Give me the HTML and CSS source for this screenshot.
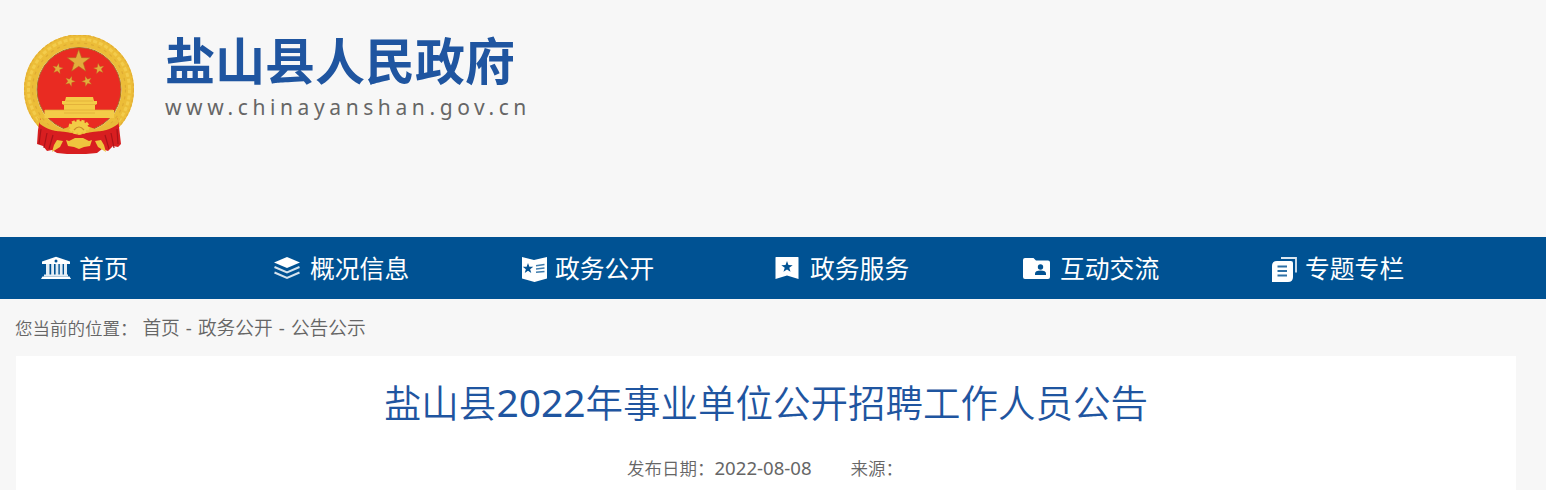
FILE: index.html
```html
<!DOCTYPE html>
<html lang="zh-CN">
<head>
    <meta charset="UTF-8">
    <meta name="viewport" content="width=device-width, initial-scale=1.0">
    <title>盐山县2022年事业单位公开招聘工作人员公告</title>
    <link rel="stylesheet" href="styles.css">
</head>
<body>
    <header class="header">
        <svg class="emblem" viewBox="0 0 112 120">
            <defs>
                <path id="star" d="M0-10 2.4-3.2 9.5-3.1 3.8 1.2 5.9 8.1 0 4-5.9 8.1-3.8 1.2-9.5-3.1-2.4-3.2z"/>
            </defs>
            <circle cx="56" cy="54.5" r="48.800" fill="none" stroke="#ecbd38" stroke-width="12.5"/>
            <circle cx="56" cy="54.5" r="54.400" fill="none" stroke="#e3ae35" stroke-width="1.2" stroke-dasharray="3 2"/>
            <circle cx="56" cy="54.5" r="50.500" fill="none" stroke="#f3cc4c" stroke-width="3" stroke-dasharray="4 2"/>
            <circle cx="56" cy="54.5" r="46.500" fill="none" stroke="#dfab33" stroke-width="1.2" stroke-dasharray="3 4"/>
            <circle cx="56" cy="54.5" r="42" fill="#e92b22" stroke="#a9701d" stroke-width="1"/>
            <g fill="#e2ad3c" stroke="#b46a20" stroke-width=".5">
                <use href="#star" transform="translate(55.7 26.5) scale(1.2)"/>
                <use href="#star" transform="translate(34.7 33.7) rotate(10) scale(.56)"/>
                <use href="#star" transform="translate(76 33.7) rotate(-10) scale(.56)"/>
                <use href="#star" transform="translate(47 46.3) rotate(20) scale(.54)"/>
                <use href="#star" transform="translate(64 46.3) rotate(-20) scale(.54)"/>
            </g>
            <path fill="#f4cb48" d="M43 62h27l1 4h3v3l-2 1v5h19v8H21.500v-8H41v-5l-2-1v-3h3z"/>
            <path fill="none" stroke="#dda936" stroke-width=".7" d="M40 69.500h33M43 66h27M22 75h68M41 78h31"/>
            <!-- ribbons -->
            <path fill="#d81e20" d="M17 83c2 8 10 12 19 13l20 3 20-3c9-1 17-5 19-13l3 26-3 3-5-1-5 5-6-2-5 4-11 1H44l-10-1-5-3-5 1-4-5-6-2 1-14z"/>
            <path fill="none" stroke="#a91419" stroke-width="1.2" d="M18 94l-2 15M24 98l-3 15M30 100l-4 14M94 94l1 15M88 98l3 15M82 100l4 14"/>
            <path fill="#e9ba39" d="M13 80c6 8 16 12 27 14l8-3h16l8 3c10-2 20-6 27-14l-4 9c-8 6-16 8-25 7l-14 4-14-4c-9 1-17-1-25-7z"/>
            <ellipse cx="56" cy="92" rx="9" ry="6" fill="#f2cb46" stroke="#f2cb46" stroke-width="3" stroke-dasharray="3 1.700"/>
            <path fill="none" stroke="#cd8d29" stroke-width="1.200" d="M51 95q5-6 10 0"/>
            <path fill="#efc43e" d="M46 106l6-3h8l6 3 3-1-2 6-6 1-5 2-5-2-6-1-2-6zM34 105l6 1-3 6-8 5 2-7zM78 105l-6 1 3 6 8 5-2-7z"/>
        </svg>
        <div class="site-name">
            <h1>盐山县人民政府</h1>
            <p>www.chinayanshan.gov.cn</p>
        </div>
    </header>

    <nav class="nav">
        <a href="#">
            <svg viewBox="0 0 30 30">
                <path fill="#fff" d="M15 3.700 29 8.500V11H1V8.500zM1.500 23.500h27L30 26H0z"/>
                <path fill="#e4edf4" d="M5 11h3.500v11H5zM10.200 11h2.800v11h-2.800zM14.600 11h2.800v11h-2.800zM18.800 11h2.800v11h-2.800zM23 11h3v11h-3zM3 21.500h24v2H3z"/>
                <circle cx="15" cy="8" r="1.500" fill="#005293"/>
            </svg>
            <span>首页</span>
        </a>
        <a href="#">
            <svg viewBox="0 0 30 30">
                <path fill="#fff" d="M15 4 28 9.500 15 15 2 9.500z"/>
                <path fill="none" stroke="#d5e3ee" stroke-width="2" d="M2.500 14 15 19.500 27.500 14M2.500 19.500 15 25l12.500-5.500"/>
            </svg>
            <span>概况信息</span>
        </a>
        <a href="#">
            <svg viewBox="0 0 30 30">
                <path fill="#fff" d="M5 4l12 3L30 4v21.500L17.500 29 5 25.500z"/>
                <use href="#star" fill="#005293" stroke="#005293" stroke-width="3" transform="translate(11 15.500) scale(.38)"/>
                <path fill="none" stroke="#3f7cac" stroke-width="1.500" d="M19 12.800 27.500 11.500M19 16l8.500-1M19 19.200l8.500-.700"/>
            </svg>
            <span>政务公开</span>
        </a>
        <a href="#">
            <svg viewBox="0 0 30 30">
                <path fill="#fff" d="M4 4h22q.500 0 .500.500V26L15 22.500 3.500 26V4.500q0-.500.500-.500z"/>
                <use href="#star" fill="#005293" transform="translate(15 14) scale(.6)"/>
            </svg>
            <span>政务服务</span>
        </a>
        <a href="#">
            <svg viewBox="0 0 30 30">
                <path fill="#fff" d="M3 5h8.500L14 7.500h12q2 0 2 2V24q0 2-2 2H3q-2 0-2-2V7q0-2 2-2z"/>
                <circle cx="18.500" cy="14" r="2.700" fill="#005293"/>
                <path fill="#005293" d="M13 22v-1.500q0-3 5.500-3t5.500 3V22z"/>
            </svg>
            <span>互动交流</span>
        </a>
        <a href="#">
            <svg viewBox="0 0 30 30">
                <path fill="none" stroke="#dbe7f1" stroke-width="1.800" d="M14 5h15v14.500"/>
                <path fill="#fff" d="M10 8h14q2 0 2 2v14q0 5-5 5H5V13q0-5 5-5z"/>
                <path fill="none" stroke="#2e70a5" stroke-width="1.800" d="M10.500 13.500h9.500M10.500 18h9.500M10.500 22.500h9.500"/>
            </svg>
            <span>专题专栏</span>
        </a>
    </nav>

    <div class="breadcrumb">
        <span class="label">您当前的位置：</span>
        <a href="#">首页</a><i>-</i><a href="#">政务公开</a><i>-</i><a href="#">公告公示</a>
    </div>

    <main class="article">
        <h2>盐山县<span class="year">2022</span>年事业单位公开招聘工作人员公告</h2>
        <div class="meta">
            <span>发布日期：<time>2022-08-08</time></span>
            <span>来源：</span>
        </div>
    </main>
</body>
</html>
```
FILE: styles.css
```css
* {
    box-sizing: border-box;
    margin: 0;
    padding: 0;
}
body {
    height: 490px;
    overflow: hidden;
    background: #f7f7f7;
    color: #666;
    font-family: "Noto Sans", "Noto Sans CJK SC", sans-serif;
}
a {
    color: inherit;
    text-decoration: none;
}
.header {
    display: flex;
    height: 237px;
    padding: 34px 23px 0;
}
.emblem {
    width: 112px;
    height: 120px;
    margin: 1px 30px 0 0;
}
.site-name h1 {
    height: 54px;
    color: #1f55a0;
    font-size: 50px;
    font-weight: bold;
    line-height: 54px;
}
.site-name p {
    font-size: 21px;
    line-height: 38px;
    letter-spacing: 4.6px;
}
.nav {
    display: grid;
    grid-template-columns: 231px 245px 255px 250px 245px 1fr;
    align-items: center;
    height: 62px;
    padding-left: 41px;
    background: #005293;
    color: #fff;
    font-size: 24.8px;
}
.nav a {
    display: flex;
    align-items: center;
    gap: 8px;
    line-height: 30px;
}
.nav svg {
    width: 30px;
    height: 30px;
}
.breadcrumb {
    height: 57px;
    padding-left: 15px;
    font-size: 18.75px;
    font-weight: 350;
    line-height: 57px;
}
.breadcrumb .label {
    font-size: 17.5px;
}
.breadcrumb i {
    display: inline-block;
    width: 18px;
    font-style: normal;
    font-weight: 400;
    text-align: center;
}
.article {
    width: 1500px;
    height: 134px;
    margin-left: 16px;
    background: #fff;
    text-align: center;
}
.article h2 {
    padding-top: 16px;
    color: #1f55a0;
    font-size: 37.5px;
    font-weight: 350;
    line-height: 62px;
}
.article .year {
    font-size: 39px;
    font-weight: 400;
    line-height: 1;
}
.meta {
    display: flex;
    justify-content: center;
    gap: 39px;
    padding: 19px 2px 0 0;
    font-size: 17.5px;
    font-weight: 350;
    line-height: 30px;
}
.meta time {
    font-size: 18.6px;
    font-weight: 400;
}
```
